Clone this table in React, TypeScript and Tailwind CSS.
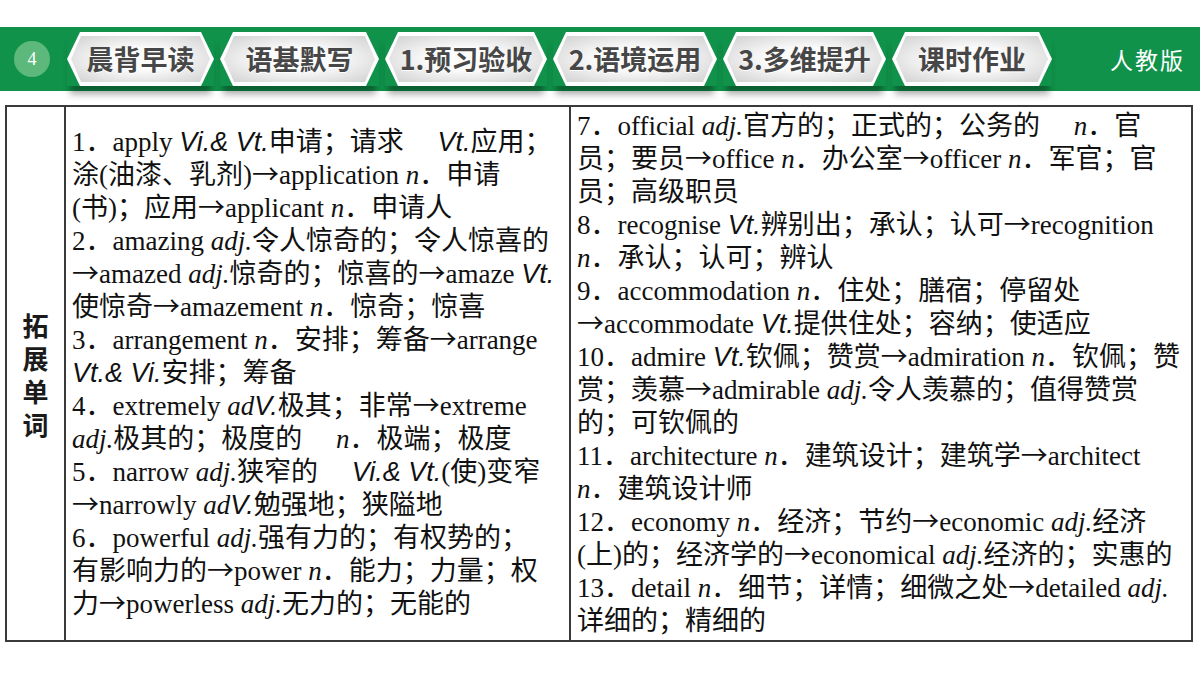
import React from "react";

const tabs = [
  { label: "晨背早读", w: "w-[147px]" },
  { label: "语基默写", w: "w-[159px]" },
  { label: "1.预习验收", w: "w-[162px]" },
  { label: "2.语境运用", w: "w-[164px]" },
  { label: "3.多维提升", w: "w-[163px]" },
  { label: "课时作业", w: "w-[160px]" },
];

// part of speech, italic serif (adj. n.)
const I = ({ children }: { children: React.ReactNode }) => (
  <span className="italic">{children}</span>
);

// Vt. / Vi. in sans italic, like the slide
const V = ({ children }: { children: React.ReactNode }) => (
  <span className="font-['Liberation_Sans',sans-serif] italic">{children}</span>
);

// arrow drawn from the CJK font so it sits mid-line
const A = () => (
  <span className="font-['Noto_Sans_CJK_SC',sans-serif] leading-none">→</span>
);

const Line = ({ children }: { children: React.ReactNode }) => (
  <div className="h-[33px] whitespace-nowrap leading-[33px]">{children}</div>
);

const leftLines: React.ReactNode[] = [
  <>1．apply <V>Vi.&amp; Vt.</V>申请；请求{"\u3000 "}<V>Vt.</V>应用；</>,
  <>涂(油漆、乳剂)<A />application <I>n</I>．申请</>,
  <>(书)；应用<A />applicant <I>n</I>．申请人</>,
  <>2．amazing <I>adj.</I>令人惊奇的；令人惊喜的</>,
  <><A />amazed <I>adj.</I>惊奇的；惊喜的<A />amaze <V>Vt.</V></>,
  <>使惊奇<A />amazement <I>n</I>．惊奇；惊喜</>,
  <>3．arrangement <I>n</I>．安排；筹备<A />arrange</>,
  <><V>Vt.&amp; Vi.</V>安排；筹备</>,
  <>4．extremely <I>ad</I><V>V.</V>极其；非常<A />extreme</>,
  <><I>adj.</I>极其的；极度的{"\u3000 "}<I>n</I>．极端；极度</>,
  <>5．narrow <I>adj.</I>狭窄的{"\u3000 "}<V>Vi.&amp; Vt.</V>(使)变窄</>,
  <><A />narrowly <I>ad</I><V>V.</V>勉强地；狭隘地</>,
  <>6．powerful <I>adj.</I>强有力的；有权势的；</>,
  <>有影响力的<A />power <I>n</I>．能力；力量；权</>,
  <>力<A />powerless <I>adj.</I>无力的；无能的</>,
];

const rightLines: React.ReactNode[] = [
  <>7．official <I>adj.</I>官方的；正式的；公务的{"\u3000 "}<I>n</I>．官</>,
  <>员；要员<A />office <I>n</I>．办公室<A />officer <I>n</I>．军官；官</>,
  <>员；高级职员</>,
  <>8．recognise <V>Vt.</V>辨别出；承认；认可<A />recognition</>,
  <><I>n</I>．承认；认可；辨认</>,
  <>9．accommodation <I>n</I>．住处；膳宿；停留处</>,
  <><A />accommodate <V>Vt.</V>提供住处；容纳；使适应</>,
  <>10．admire <V>Vt.</V>钦佩；赞赏<A />admiration <I>n</I>．钦佩；赞</>,
  <>赏；羡慕<A />admirable <I>adj.</I>令人羡慕的；值得赞赏</>,
  <>的；可钦佩的</>,
  <>11．architecture <I>n</I>．建筑设计；建筑学<A />architect</>,
  <><I>n</I>．建筑设计师</>,
  <>12．economy <I>n</I>．经济；节约<A />economic <I>adj.</I>经济</>,
  <>(上)的；经济学的<A />economical <I>adj.</I>经济的；实惠的</>,
  <>13．detail <I>n</I>．细节；详情；细微之处<A />detailed <I>adj.</I></>,
  <>详细的；精细的</>,
];

function Tab({ label, w }: { label: string; w: string }) {
  return (
    <div className={`${w} h-[54px] shadow-[0_11px_7px_-3px_rgba(0,0,0,0.35)]`}>
      <div className="h-full w-full bg-white p-[4px] [clip-path:polygon(13px_0,calc(100%_-_13px)_0,100%_50%,calc(100%_-_13px)_100%,13px_100%,0_50%)]">
        <div className="flex h-full w-full items-center justify-center bg-[radial-gradient(ellipse_at_center,#fbfbfb_35%,#cfcfcf_100%)] [clip-path:polygon(10px_0,calc(100%_-_10px)_0,100%_50%,calc(100%_-_10px)_100%,10px_100%,0_50%)]">
          <span className="font-['Noto_Sans_CJK_SC',sans-serif] text-[27px] font-bold text-[#474747] [text-shadow:0_1px_0_#fff]">
            {label}
          </span>
        </div>
      </div>
    </div>
  );
}

export default function App() {
  return (
    <main className="h-[675px] w-[1200px] overflow-hidden bg-white pt-[27px] font-['Liberation_Serif','Noto_Sans_CJK_SC',serif] text-[#111]">
      <header className="flex h-[64px] items-center bg-[#10924a] pl-[14px] pr-[15px]">
        <div className="flex h-[36px] w-[36px] items-center justify-center rounded-full bg-[#5cb97b] font-['Liberation_Serif',serif] text-[18px] text-white">
          4
        </div>
        <div className="ml-[17px] flex gap-[6px]">
          {tabs.map((t) => (
            <Tab key={t.label} {...t} />
          ))}
        </div>
        <div className="ml-auto font-['Noto_Sans_CJK_SC',serif] text-[23px] tracking-[2px] text-white">
          人教版
        </div>
      </header>

      <section className="ml-[5px] mt-[14px] grid h-[537px] w-[1188px] grid-cols-[57px_505px_1fr] border-2 border-[#3a3a3a]">
        <div className="flex flex-col items-center justify-center font-['Noto_Sans_CJK_SC',sans-serif] text-[26px] font-bold text-[#1a1a1a]">
          <div className="h-[33px] leading-[33px]">拓</div>
          <div className="h-[33px] leading-[33px]">展</div>
          <div className="h-[33px] leading-[33px]">单</div>
          <div className="h-[33px] leading-[33px]">词</div>
        </div>
        <div className="flex flex-col justify-center border-l-2 border-[#3a3a3a] pl-[6px] text-[27px]">
          {leftLines.map((l, i) => (
            <Line key={i}>{l}</Line>
          ))}
        </div>
        <div className="flex flex-col justify-center border-l-2 border-[#3a3a3a] pl-[6px] text-[27px]">
          {rightLines.map((l, i) => (
            <Line key={i}>{l}</Line>
          ))}
        </div>
      </section>
    </main>
  );
}
